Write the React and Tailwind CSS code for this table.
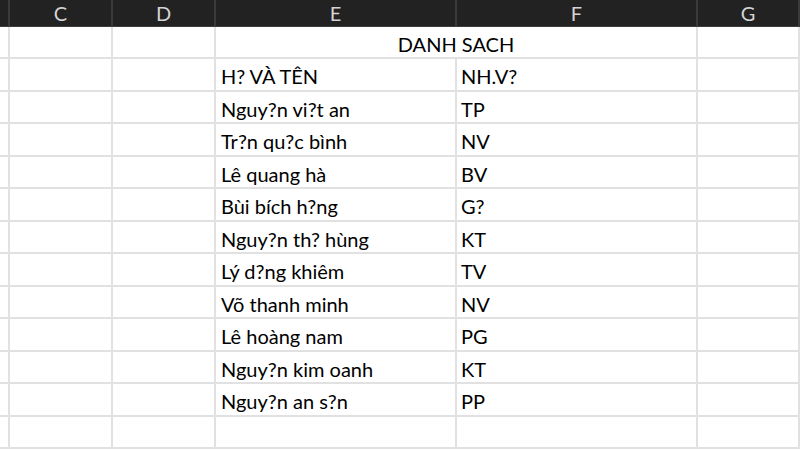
import React from "react";

const rows = [
  ["H? VÀ TÊN", "NH.V?"],
  ["Nguy?n vi?t an", "TP"],
  ["Tr?n qu?c bình", "NV"],
  ["Lê quang hà", "BV"],
  ["Bùi bích h?ng", "G?"],
  ["Nguy?n th? hùng", "KT"],
  ["Lý d?ng khiêm", "TV"],
  ["Võ thanh minh", "NV"],
  ["Lê hoàng nam", "PG"],
  ["Nguy?n kim oanh", "KT"],
  ["Nguy?n an s?n", "PP"],
  ["", ""],
];

const heights = ["h-[32px]", "h-[33px]"];

const Cell = ({ children, className = "" }) => (
  <div
    className={`border-r-2 border-b-2 border-[#e1e1e1] flex items-center overflow-hidden whitespace-nowrap ${className}`}
  >
    {children}
  </div>
);

const App = () => {
  const cols = "grid grid-cols-[10px_103px_103px_241px_241px_102px]";
  return (
    <div
      className="w-[800px] h-[450px] overflow-hidden bg-white text-black"
      style={{ fontFamily: "Lato, 'Open Sans', sans-serif" }}
    >
      {/* column header */}
      <div className={`${cols} h-[27px] bg-[#222222] text-[#d4d4d4] text-[20px] border-b border-[#3c3c3c]`}>
        {["", "C", "D", "E", "F", "G"].map((l, i) => (
          <div key={i} className="border-r-2 border-[#3a3a3a] flex items-center justify-center leading-none">
            {l}
          </div>
        ))}
      </div>

      {/* title row */}
      <div className={`${cols} h-[32px] text-[20px]`}>
        <Cell />
        <Cell />
        <Cell />
        <Cell className="col-span-2 justify-center pt-[3px]">DANH SACH</Cell>
        <Cell />
      </div>

      {rows.map((r, i) => (
        <div key={i} className={`${cols} ${heights[(i + 1) % 2]} text-[20px]`}>
          <Cell />
          <Cell />
          <Cell />
          <Cell className="pl-[5px] pt-[3px]">{r[0]}</Cell>
          <Cell className="pl-[4px] pt-[3px]">{r[1]}</Cell>
          <Cell />
        </div>
      ))}
    </div>
  );
};

export default App;
